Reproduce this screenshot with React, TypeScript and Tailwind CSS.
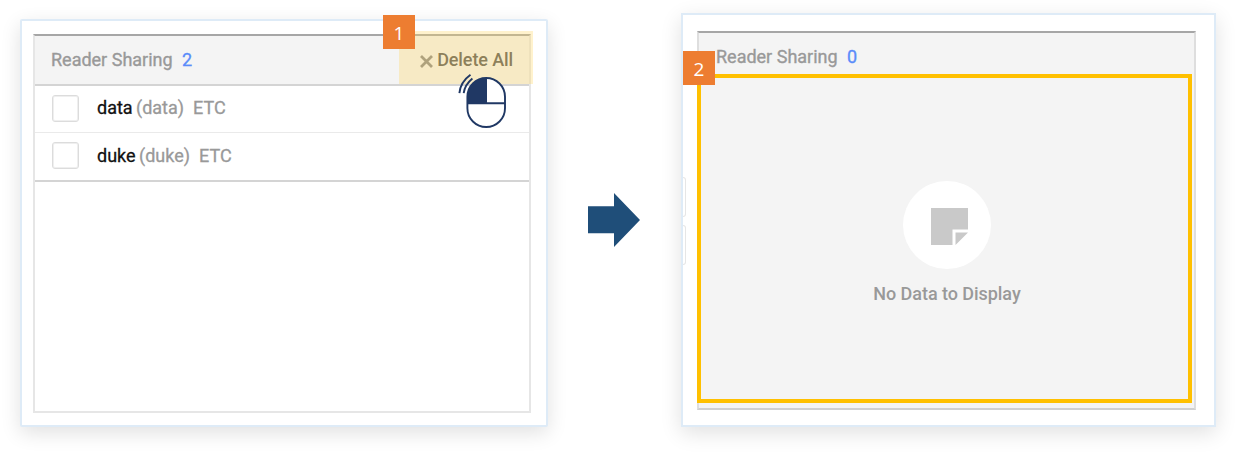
import type { ReactNode } from "react";

function Badge({ label, className }: { label: string; className: string }) {
  return (
    <div
      className={`absolute flex h-[34px] w-8 items-center justify-center bg-[#ed7d31] pt-[2px] font-['Open_Sans',sans-serif] text-[19px] leading-none text-white ${className}`}
    >
      {label}
    </div>
  );
}

function Card({ className, children }: { className: string; children: ReactNode }) {
  return (
    <section
      className={`relative shrink-0 border-2 border-[#deebf7] bg-white shadow-[0_6px_20px_rgba(0,0,0,0.12)] ${className}`}
    >
      {children}
    </section>
  );
}

function Title({ count }: { count: number }) {
  return (
    <h2 className="flex text-[18px] leading-6 whitespace-nowrap text-[#999] [-webkit-text-stroke:0.35px_currentColor]">
      <span className="w-[131px]">Reader Sharing</span>
      <span className="text-[#5a8cfa]">{count}</span>
    </h2>
  );
}

function Row({ name, nameWidth, className }: { name: string; nameWidth: string; className: string }) {
  return (
    <li
      className={`flex items-center pb-[2px] pl-[17px] text-[18px] leading-6 whitespace-nowrap [-webkit-text-stroke:0.3px_currentColor] ${className}`}
    >
      <span className="mr-[18px] flex size-[27px] shrink-0 rounded-[3px] border border-[#dcdcdc] bg-white inset-ring inset-ring-[#efefef]" />
      <span className={`text-[#111] ${nameWidth}`}>{name}</span>
      <span className="text-[#999]">({name})</span>
      <span className="ml-[9px] text-[#999]">ETC</span>
    </li>
  );
}

function MouseIcon() {
  return (
    <svg className="absolute top-[52px] left-[435px]" width="52" height="58" viewBox="457 73 52 58" fill="none">
      <rect x="467.4" y="78" width="37.6" height="49" rx="18.8" fill="#fff" />
      <path d="M487 78h-.8a18.8 18.8 0 0 0-18.8 18.8V103H487z" fill="#203864" />
      <rect x="467.4" y="78" width="37.6" height="49" rx="18.8" stroke="#203864" strokeWidth="1.9" />
      <path d="M467.4 103.2H505" stroke="#203864" strokeWidth="1.9" />
      <path d="M459.4 93.2C460 86 464.5 79 470.5 74.7M463.7 93.2C464.4 87.5 467.7 82.5 472.4 78.6" stroke="#203864" strokeWidth="1.9" />
    </svg>
  );
}

export default function App() {
  return (
    <main className="flex h-[452px] w-[1239px] items-start overflow-hidden bg-white font-['Roboto',sans-serif]">
      <Card className="mt-[19px] ml-5 h-[408px] w-[528px] rounded-[2px] pt-[13px] pl-[11px]">
        <div className="h-[379px] w-[498px] border-2 border-[#e6e6e6] border-t-[#a6a6a6]">
          <header className="flex h-[50px] items-center justify-between border-b-2 border-[#d4d4d4] bg-[#f4f4f4] pr-[16px] pl-4">
            <Title count={2} />
            <button className="flex items-center gap-[4px] text-[18px] leading-6 font-medium tracking-[-0.1px] whitespace-nowrap text-[#555]">
              <svg className="mt-[2px]" width="13" height="13" viewBox="0 0 13 13" stroke="#888" strokeWidth="2.8">
                <path d="M1 1l11 11M12 1L1 12" />
              </svg>
              <span>Delete All</span>
            </button>
          </header>
          <ul>
            <Row name="data" nameWidth="w-[39px]" className="h-[47px] border-b border-[#eaeaea]" />
            <Row name="duke" nameWidth="w-[42px]" className="h-[49px] border-b-2 border-[#d4d4d4]" />
          </ul>
        </div>
        <div className="absolute top-[10px] left-[377px] h-[53px] w-[134px] bg-[#ffd966]/33" />
        <Badge label="1" className="top-[-6px] left-[361px]" />
        <MouseIcon />
      </Card>

      <svg className="mt-[193px] ml-10 shrink-0" width="52" height="54" viewBox="0 0 52 54">
        <path d="M0 13.2H26V0L52 27 26 54V40.3H0z" fill="#1f4e79" />
      </svg>

      <Card className="mt-[13px] ml-[41px] h-[414px] w-[535px] pt-4 pl-[14px]">
        <div className="h-[379px] w-[499px] border-2 border-[#dedede] border-t-[#a6a6a6] border-b-[#d0d0d0] bg-[#f4f4f4]">
          <header className="flex h-[41px] items-center pt-[7px] pl-[17px]">
            <Title count={0} />
          </header>
          <div className="flex h-[334px] flex-col items-center pt-[107px]">
            <div className="flex size-[88px] items-center justify-center rounded-full bg-white">
              <svg className="mt-[3px] ml-[5px]" width="37" height="37" viewBox="0 0 37 37" fill="#c9c9c9">
                <path d="M0 0h37v21.5H21.5V37H0zM24.5 24.5H37L24.5 37z" />
              </svg>
            </div>
            <p className="mt-[13px] ml-px text-[18px] leading-6 font-medium tracking-[-0.05px] whitespace-nowrap text-[#999]">
              No Data to Display
            </p>
          </div>
        </div>
        <div className="absolute top-[59px] left-[14px] h-[329px] w-[495px] border-4 border-[#ffc000]" />
        <div className="absolute top-[162px] left-0 h-[40px] w-[3px] rounded-r-[3px] border border-l-0 border-[#e6e6e6]" />
        <div className="absolute top-[210px] left-0 h-[40px] w-[3px] rounded-r-[3px] border border-l-0 border-[#e6e6e6]" />
        <Badge label="2" className="top-[36px] left-0" />
      </Card>
    </main>
  );
}
